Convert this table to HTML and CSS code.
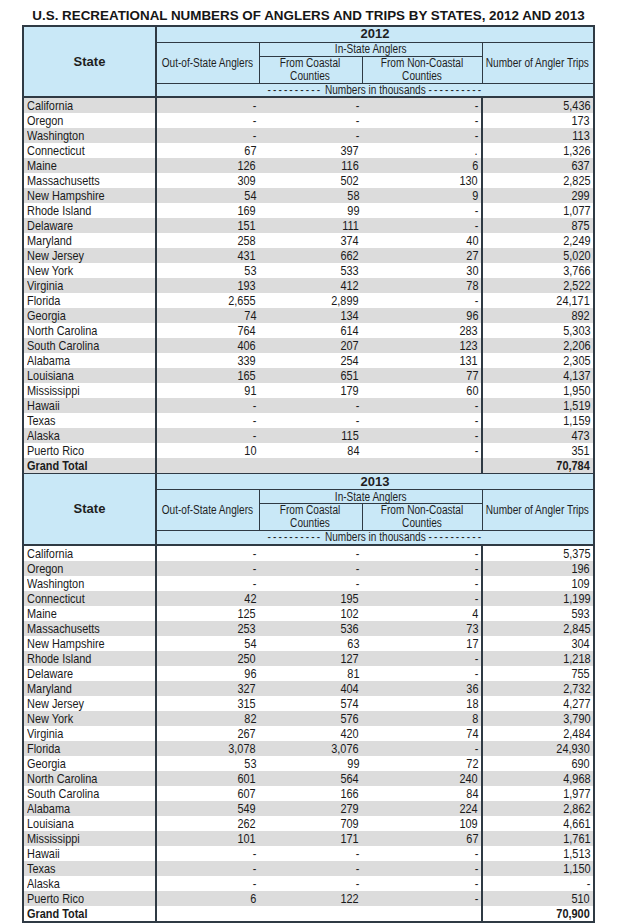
FILE: index.html
```html
<!DOCTYPE html>
<html>
<head>
<meta charset="utf-8">
<title>U.S. Recreational Numbers of Anglers and Trips by States, 2012 and 2013</title>
<link rel="stylesheet" href="styles.css">
</head>
<body>
<div class="page">
<h1 class="title">U.S. RECREATIONAL NUMBERS OF ANGLERS AND TRIPS BY STATES, 2012 AND 2013</h1>
<table class="data">
<colgroup><col class="w1"><col class="w2"><col class="w3"><col class="w4"><col class="w5"></colgroup>
<tbody class="head">
<tr class="ra"><th rowspan="4" class="state">State</th><th colspan="4" class="year">2012</th></tr>
<tr class="rb"><th rowspan="2" class="sub"><span class="sc">Out-of-State Anglers</span></th><th colspan="2" class="sub"><span class="sc">In-State Anglers</span></th><th rowspan="2" class="sub"><span class="sc">Number of Angler Trips</span></th></tr>
<tr class="rc"><th class="sub two"><span class="sc">From Coastal<br>Counties</span></th><th class="sub two"><span class="sc">From Non-Coastal<br>Counties</span></th></tr>
<tr class="rd"><th colspan="4" class="sub units"><span class="sc"><span class="dash">----------</span> Numbers in thousands <span class="dash">----------</span></span></th></tr>
</tbody>
<tbody class="body odd">
<tr><td class="s"><span>California</span></td><td class="n"><span>-</span></td><td class="n"><span>-</span></td><td class="n c4"><span>-</span></td><td class="n"><span>5,436</span></td></tr>
<tr><td class="s"><span>Oregon</span></td><td class="n"><span>-</span></td><td class="n"><span>-</span></td><td class="n c4"><span>-</span></td><td class="n"><span>173</span></td></tr>
<tr><td class="s"><span>Washington</span></td><td class="n"><span>-</span></td><td class="n"><span>-</span></td><td class="n c4"><span>-</span></td><td class="n"><span>113</span></td></tr>
<tr><td class="s"><span>Connecticut</span></td><td class="n"><span>67</span></td><td class="n"><span>397</span></td><td class="n c4"><span>.</span></td><td class="n"><span>1,326</span></td></tr>
<tr><td class="s"><span>Maine</span></td><td class="n"><span>126</span></td><td class="n"><span>116</span></td><td class="n c4"><span>6</span></td><td class="n"><span>637</span></td></tr>
<tr><td class="s"><span>Massachusetts</span></td><td class="n"><span>309</span></td><td class="n"><span>502</span></td><td class="n c4"><span>130</span></td><td class="n"><span>2,825</span></td></tr>
<tr><td class="s"><span>New Hampshire</span></td><td class="n"><span>54</span></td><td class="n"><span>58</span></td><td class="n c4"><span>9</span></td><td class="n"><span>299</span></td></tr>
<tr><td class="s"><span>Rhode Island</span></td><td class="n"><span>169</span></td><td class="n"><span>99</span></td><td class="n c4"><span>-</span></td><td class="n"><span>1,077</span></td></tr>
<tr><td class="s"><span>Delaware</span></td><td class="n"><span>151</span></td><td class="n"><span>111</span></td><td class="n c4"><span>-</span></td><td class="n"><span>875</span></td></tr>
<tr><td class="s"><span>Maryland</span></td><td class="n"><span>258</span></td><td class="n"><span>374</span></td><td class="n c4"><span>40</span></td><td class="n"><span>2,249</span></td></tr>
<tr><td class="s"><span>New Jersey</span></td><td class="n"><span>431</span></td><td class="n"><span>662</span></td><td class="n c4"><span>27</span></td><td class="n"><span>5,020</span></td></tr>
<tr><td class="s"><span>New York</span></td><td class="n"><span>53</span></td><td class="n"><span>533</span></td><td class="n c4"><span>30</span></td><td class="n"><span>3,766</span></td></tr>
<tr><td class="s"><span>Virginia</span></td><td class="n"><span>193</span></td><td class="n"><span>412</span></td><td class="n c4"><span>78</span></td><td class="n"><span>2,522</span></td></tr>
<tr><td class="s"><span>Florida</span></td><td class="n"><span>2,655</span></td><td class="n"><span>2,899</span></td><td class="n c4"><span>-</span></td><td class="n"><span>24,171</span></td></tr>
<tr><td class="s"><span>Georgia</span></td><td class="n"><span>74</span></td><td class="n"><span>134</span></td><td class="n c4"><span>96</span></td><td class="n"><span>892</span></td></tr>
<tr><td class="s"><span>North Carolina</span></td><td class="n"><span>764</span></td><td class="n"><span>614</span></td><td class="n c4"><span>283</span></td><td class="n"><span>5,303</span></td></tr>
<tr><td class="s"><span>South Carolina</span></td><td class="n"><span>406</span></td><td class="n"><span>207</span></td><td class="n c4"><span>123</span></td><td class="n"><span>2,206</span></td></tr>
<tr><td class="s"><span>Alabama</span></td><td class="n"><span>339</span></td><td class="n"><span>254</span></td><td class="n c4"><span>131</span></td><td class="n"><span>2,305</span></td></tr>
<tr><td class="s"><span>Louisiana</span></td><td class="n"><span>165</span></td><td class="n"><span>651</span></td><td class="n c4"><span>77</span></td><td class="n"><span>4,137</span></td></tr>
<tr><td class="s"><span>Mississippi</span></td><td class="n"><span>91</span></td><td class="n"><span>179</span></td><td class="n c4"><span>60</span></td><td class="n"><span>1,950</span></td></tr>
<tr><td class="s"><span>Hawaii</span></td><td class="n"><span>-</span></td><td class="n"><span>-</span></td><td class="n c4"><span>-</span></td><td class="n"><span>1,519</span></td></tr>
<tr><td class="s"><span>Texas</span></td><td class="n"><span>-</span></td><td class="n"><span>-</span></td><td class="n c4"><span>-</span></td><td class="n"><span>1,159</span></td></tr>
<tr><td class="s"><span>Alaska</span></td><td class="n"><span>-</span></td><td class="n"><span>115</span></td><td class="n c4"><span>-</span></td><td class="n"><span>473</span></td></tr>
<tr><td class="s"><span>Puerto Rico</span></td><td class="n"><span>10</span></td><td class="n"><span>84</span></td><td class="n c4"><span>-</span></td><td class="n"><span>351</span></td></tr>
<tr class="total"><td class="s"><span>Grand Total</span></td><td class="n"></td><td class="n"></td><td class="n c4"></td><td class="n"><span>70,784</span></td></tr>
</tbody>
<tbody class="head">
<tr class="ra"><th rowspan="4" class="state">State</th><th colspan="4" class="year">2013</th></tr>
<tr class="rb"><th rowspan="2" class="sub"><span class="sc">Out-of-State Anglers</span></th><th colspan="2" class="sub"><span class="sc">In-State Anglers</span></th><th rowspan="2" class="sub"><span class="sc">Number of Angler Trips</span></th></tr>
<tr class="rc"><th class="sub two"><span class="sc">From Coastal<br>Counties</span></th><th class="sub two"><span class="sc">From Non-Coastal<br>Counties</span></th></tr>
<tr class="rd"><th colspan="4" class="sub units"><span class="sc"><span class="dash">----------</span> Numbers in thousands <span class="dash">----------</span></span></th></tr>
</tbody>
<tbody class="body even">
<tr><td class="s"><span>California</span></td><td class="n"><span>-</span></td><td class="n"><span>-</span></td><td class="n c4"><span>-</span></td><td class="n"><span>5,375</span></td></tr>
<tr><td class="s"><span>Oregon</span></td><td class="n"><span>-</span></td><td class="n"><span>-</span></td><td class="n c4"><span>-</span></td><td class="n"><span>196</span></td></tr>
<tr><td class="s"><span>Washington</span></td><td class="n"><span>-</span></td><td class="n"><span>-</span></td><td class="n c4"><span>-</span></td><td class="n"><span>109</span></td></tr>
<tr><td class="s"><span>Connecticut</span></td><td class="n"><span>42</span></td><td class="n"><span>195</span></td><td class="n c4"><span>-</span></td><td class="n"><span>1,199</span></td></tr>
<tr><td class="s"><span>Maine</span></td><td class="n"><span>125</span></td><td class="n"><span>102</span></td><td class="n c4"><span>4</span></td><td class="n"><span>593</span></td></tr>
<tr><td class="s"><span>Massachusetts</span></td><td class="n"><span>253</span></td><td class="n"><span>536</span></td><td class="n c4"><span>73</span></td><td class="n"><span>2,845</span></td></tr>
<tr><td class="s"><span>New Hampshire</span></td><td class="n"><span>54</span></td><td class="n"><span>63</span></td><td class="n c4"><span>17</span></td><td class="n"><span>304</span></td></tr>
<tr><td class="s"><span>Rhode Island</span></td><td class="n"><span>250</span></td><td class="n"><span>127</span></td><td class="n c4"><span>-</span></td><td class="n"><span>1,218</span></td></tr>
<tr><td class="s"><span>Delaware</span></td><td class="n"><span>96</span></td><td class="n"><span>81</span></td><td class="n c4"><span>-</span></td><td class="n"><span>755</span></td></tr>
<tr><td class="s"><span>Maryland</span></td><td class="n"><span>327</span></td><td class="n"><span>404</span></td><td class="n c4"><span>36</span></td><td class="n"><span>2,732</span></td></tr>
<tr><td class="s"><span>New Jersey</span></td><td class="n"><span>315</span></td><td class="n"><span>574</span></td><td class="n c4"><span>18</span></td><td class="n"><span>4,277</span></td></tr>
<tr><td class="s"><span>New York</span></td><td class="n"><span>82</span></td><td class="n"><span>576</span></td><td class="n c4"><span>8</span></td><td class="n"><span>3,790</span></td></tr>
<tr><td class="s"><span>Virginia</span></td><td class="n"><span>267</span></td><td class="n"><span>420</span></td><td class="n c4"><span>74</span></td><td class="n"><span>2,484</span></td></tr>
<tr><td class="s"><span>Florida</span></td><td class="n"><span>3,078</span></td><td class="n"><span>3,076</span></td><td class="n c4"><span>-</span></td><td class="n"><span>24,930</span></td></tr>
<tr><td class="s"><span>Georgia</span></td><td class="n"><span>53</span></td><td class="n"><span>99</span></td><td class="n c4"><span>72</span></td><td class="n"><span>690</span></td></tr>
<tr><td class="s"><span>North Carolina</span></td><td class="n"><span>601</span></td><td class="n"><span>564</span></td><td class="n c4"><span>240</span></td><td class="n"><span>4,968</span></td></tr>
<tr><td class="s"><span>South Carolina</span></td><td class="n"><span>607</span></td><td class="n"><span>166</span></td><td class="n c4"><span>84</span></td><td class="n"><span>1,977</span></td></tr>
<tr><td class="s"><span>Alabama</span></td><td class="n"><span>549</span></td><td class="n"><span>279</span></td><td class="n c4"><span>224</span></td><td class="n"><span>2,862</span></td></tr>
<tr><td class="s"><span>Louisiana</span></td><td class="n"><span>262</span></td><td class="n"><span>709</span></td><td class="n c4"><span>109</span></td><td class="n"><span>4,661</span></td></tr>
<tr><td class="s"><span>Mississippi</span></td><td class="n"><span>101</span></td><td class="n"><span>171</span></td><td class="n c4"><span>67</span></td><td class="n"><span>1,761</span></td></tr>
<tr><td class="s"><span>Hawaii</span></td><td class="n"><span>-</span></td><td class="n"><span>-</span></td><td class="n c4"><span>-</span></td><td class="n"><span>1,513</span></td></tr>
<tr><td class="s"><span>Texas</span></td><td class="n"><span>-</span></td><td class="n"><span>-</span></td><td class="n c4"><span>-</span></td><td class="n"><span>1,150</span></td></tr>
<tr><td class="s"><span>Alaska</span></td><td class="n"><span>-</span></td><td class="n"><span>-</span></td><td class="n c4"><span>-</span></td><td class="n"><span>-</span></td></tr>
<tr><td class="s"><span>Puerto Rico</span></td><td class="n"><span>6</span></td><td class="n"><span>122</span></td><td class="n c4"><span>-</span></td><td class="n"><span>510</span></td></tr>
<tr class="total"><td class="s"><span>Grand Total</span></td><td class="n"></td><td class="n"></td><td class="n c4"></td><td class="n"><span>70,900</span></td></tr>
</tbody>
</table>
</div>
</body>
</html>
```
FILE: styles.css
```css
html, body { margin: 0; padding: 0; background: #ffffff; }
body { font-family: "Liberation Sans", Arial, sans-serif; color: #1c1c1c; }

.page { width: 573px; margin-left: 22px; padding-top: 8px; }

.title {
  margin: 0 0 1px 0;
  font-size: 13.4px;
  line-height: 16px;
  font-weight: bold;
  text-align: center;
  white-space: nowrap;
  color: #161616;
}

.data {
  width: 571px;
  table-layout: fixed;
  border-collapse: collapse;
  border: 2px solid #2f3a44;
}
.w1 { width: 133px; }
.w2 { width: 103px; }
.w3 { width: 103px; }
.w4 { width: 120px; }
.w5 { width: 112px; }

/* header */
.head th {
  background: #c9e8f7;
  border: 1px solid #2f3a44;
  padding: 0;
  font-weight: normal;
  color: #1e1e1e;
  vertical-align: middle;
  white-space: nowrap;
  overflow: visible;
}
.head .ra { height: 16px; }
.head .rb { height: 14px; }
.head .rc { height: 27px; }
.head .rd { height: 14px; }
.head th.state { font-size: 13px; font-weight: bold; border-right-width: 2px; border-bottom-width: 2px; }
.head th.year { font-size: 13px; font-weight: bold; line-height: 14px; }
.head th.sub { font-size: 12px; line-height: 12px; }
.head th.units { border-bottom-width: 2px; }
.head th.two { line-height: 13px; }

.sc {
  display: inline-block;
  margin: 0 -24px;
  transform: scaleX(0.84);
  transform-origin: center center;
}
.dash { letter-spacing: 2.5px; }

/* body rows */
.body td {
  padding: 0 3px;
  font-size: 13px;
  line-height: 15px;
  height: 15px;
  white-space: nowrap;
  overflow: visible;
  color: #1a1a1a;
}
.body td > span {
  display: inline-block;
  transform: scaleX(0.84);
}
.body td.s { text-align: left; border-right: 2px solid #2f3a44; }
.body td.s > span { transform-origin: left center; }
.body td.n { text-align: right; }
.body td.n > span { transform-origin: right center; }
.body td.c4 { border-right: 2px solid #2f3a44; }

.body.odd tr:nth-child(odd) td { background: #dcdcdc; }
.body.even tr:nth-child(even) td { background: #dcdcdc; }

.body tr.total td { font-weight: bold; }
```
